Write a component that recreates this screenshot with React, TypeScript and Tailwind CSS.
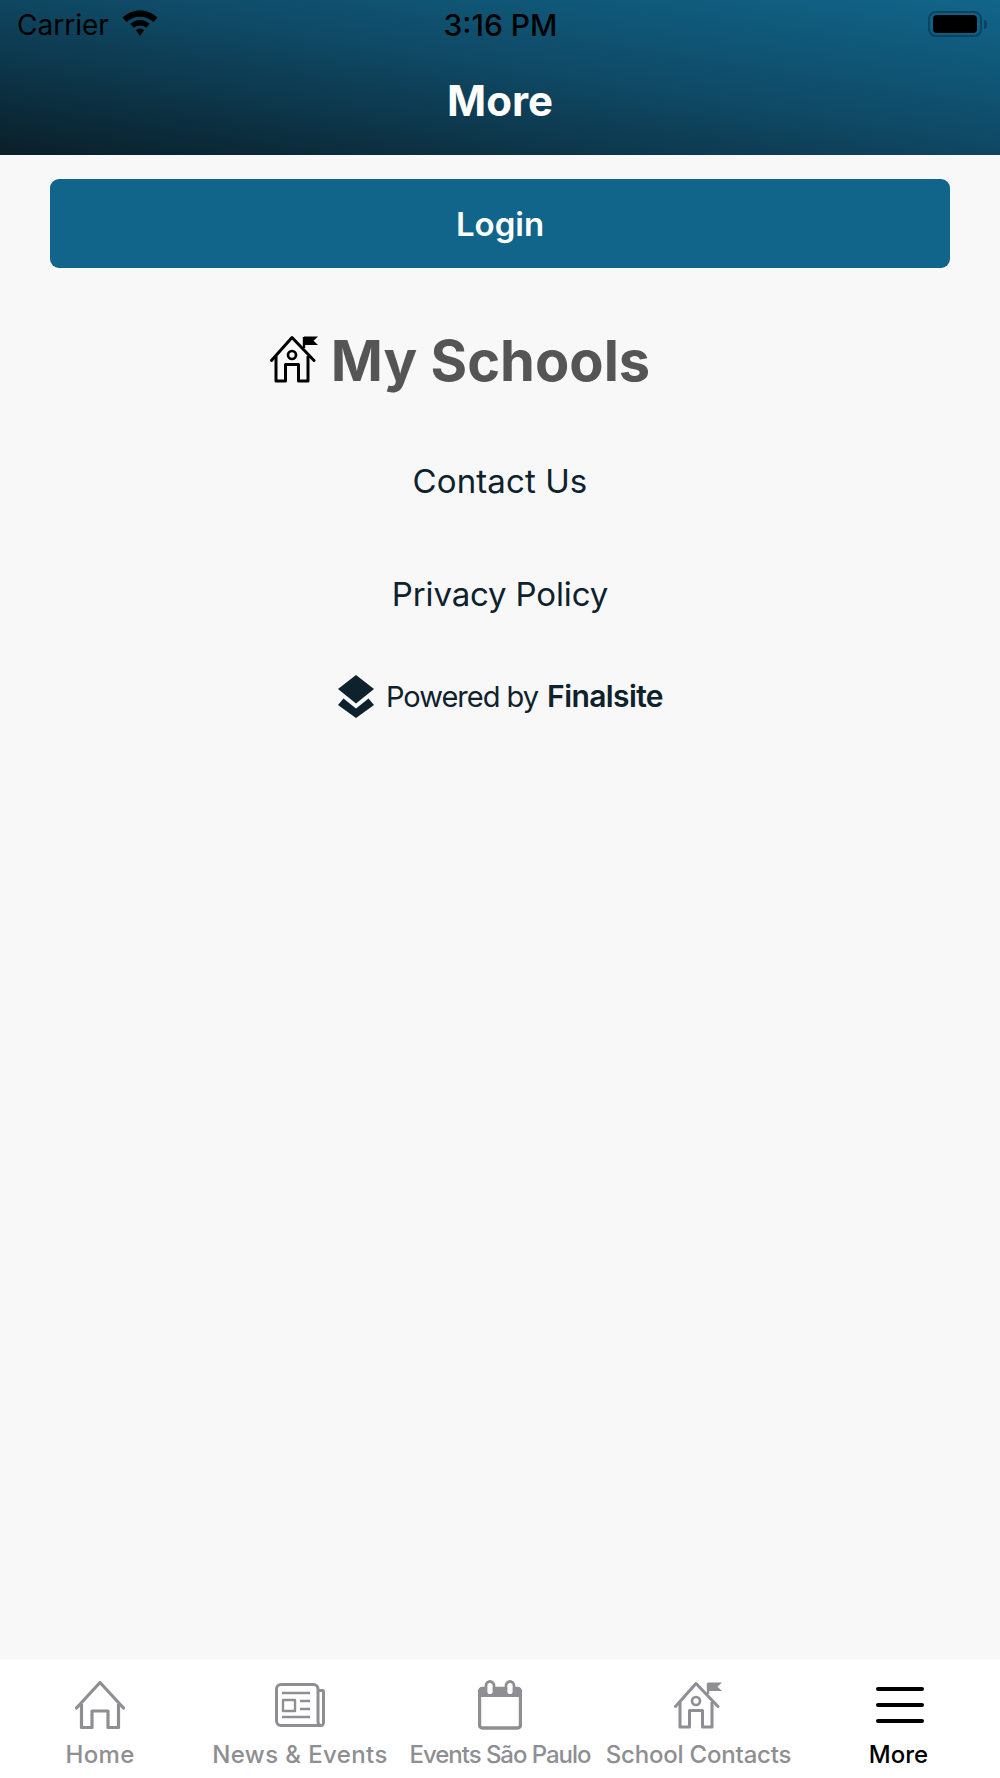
import React from "react";

const sans = "font-['Inter','Liberation_Sans',sans-serif]";

function Wifi() {
  return (
    <svg width="38" height="28" viewBox="0 0 36 28" className="ml-[12px] mt-[-4px]">
      <path d="M18 1.500C11.500 1.500 5.800 4 0.500 8.500L4.500 13C8.500 9.700 13 7.800 18 7.800C23 7.800 27.500 9.700 31.500 13L35.500 8.500C30.200 4 24.500 1.500 18 1.500Z" fill="#000" />
      <path d="M18 11C14.600 11 11.300 12.300 8.200 14.800L11.800 18.800C13.700 17.200 15.800 16.400 18 16.400C20.200 16.400 22.300 17.200 24.200 18.800L27.800 14.800C24.700 12.300 21.400 11 18 11Z" fill="#000" />
      <path d="M18 19.500C16.500 19.500 15.200 20 14 21.200L18 27L22 21.200C20.800 20 19.500 19.500 18 19.500Z" fill="#000" />
    </svg>
  );
}

function Battery() {
  return (
    <div className="mt-[-2px] flex items-center">
      <div className="flex h-[26px] w-[54px] items-center justify-center rounded-[8px] border-[2px] border-[#0b4460]">
        <div className="h-[18px] w-[44px] rounded-[4px] bg-black" />
      </div>
      <div className="ml-[2px] h-[9px] w-[3px] rounded-r-[3px] bg-[#0b4460]" />
    </div>
  );
}

function SchoolIcon({ color, strokeWidth }: { color: string; strokeWidth: number }) {
  return (
    <svg width="48" height="48" viewBox="0 0 48 48" fill="none">
      <path d="M1.500 25.500L22 2.500L44 25.500" stroke={color} strokeWidth={strokeWidth} strokeLinejoin="round" strokeLinecap="round" />
      <path d="M6 21V46H15.500V29.500H28.500V46H38V21" stroke={color} strokeWidth={strokeWidth} strokeLinejoin="round" />
      <circle cx="22" cy="20" r="4" stroke={color} strokeWidth={strokeWidth * 0.9} />
      <path d="M34 13V2" stroke={color} strokeWidth={strokeWidth * 0.8} />
      <path d="M34 1.500H48L43.500 5.800L48 10H34Z" fill={color} />
    </svg>
  );
}

function HomeIcon() {
  return (
    <svg width="50" height="50" viewBox="0 0 50 50" fill="none" stroke="#8e8e93" strokeWidth="3.200" strokeLinejoin="round">
      <path d="M1.500 28L25 2.500L48.500 28" strokeLinecap="round" />
      <path d="M6.500 24V47.500H17V31H33V47.500H43.500V24" />
    </svg>
  );
}

function NewsIcon() {
  return (
    <svg width="50" height="44" viewBox="0 0 50 44" fill="none" stroke="#8e8e93" strokeWidth="3" strokeLinejoin="round">
      <path d="M43 7.500V38.500C43 41 44.500 42.500 46 42.500H6C3.500 42.500 1.500 40.500 1.500 38V6C1.500 3.500 3.500 1.500 6 1.500H38.500C41 1.500 43 3.500 43 6V7.500H47.500C48 7.500 48.500 8 48.500 9V39.500C48.500 41 47.500 42.500 46 42.500" />
      <path d="M7 10H35M7 34H35M25 18H35M25 26H35" strokeWidth="2.400" />
      <rect x="8" y="17" width="12" height="11" strokeWidth="2.400" />
    </svg>
  );
}

function CalendarIcon() {
  return (
    <svg width="44" height="50" viewBox="0 0 44 50" fill="none">
      <rect x="1.500" y="8.500" width="41" height="39.500" rx="3" stroke="#8e8e93" strokeWidth="3.400" />
      <path d="M1 17V10C1 8 2.500 7 4 7H40C41.500 7 43 8 43 10V17Z" fill="#8e8e93" />
      <rect x="8" y="1.500" width="8" height="14" rx="4" fill="#fff" stroke="#8e8e93" strokeWidth="2.800" />
      <rect x="28" y="1.500" width="8" height="14" rx="4" fill="#fff" stroke="#8e8e93" strokeWidth="2.800" />
    </svg>
  );
}

function MenuIcon() {
  return (
    <div className="flex h-[50px] w-[48px] flex-col justify-center gap-[12px]">
      <div className="h-[4px] rounded-full bg-black" />
      <div className="h-[4px] rounded-full bg-black" />
      <div className="h-[4px] rounded-full bg-black" />
    </div>
  );
}

function Layers() {
  return (
    <svg width="38" height="43" viewBox="0 0 38 43" fill="#0d222d">
      <path d="M19 0L37 14L19 28.500L1 14Z" />
      <path d="M6.500 23.500L19 33.500L31.500 23.500L37 30L19 43L1 30Z" />
    </svg>
  );
}

function Tab({ icon, label, labelClass }: { icon: React.ReactNode; label: string; labelClass: string }) {
  return (
    <div className="flex w-[200px] flex-col items-center">
      <div className="flex h-[50px] items-center justify-center">{icon}</div>
      <span className={`mt-[11px] whitespace-nowrap text-[24px] font-medium leading-[28px] ${labelClass}`}>{label}</span>
    </div>
  );
}

export default function App() {
  return (
    <div className={`flex h-[1778px] w-[1000px] flex-col overflow-hidden bg-[#f8f8f9] ${sans}`}>
      <header className="flex h-[155px] shrink-0 flex-col bg-[linear-gradient(to_top_right,#0a1f29_0%,#0f4a66_55%,#11658a_100%)]">
        <div className="flex h-[50px] items-center justify-between pl-[17px] pr-[13px]">
          <div className="flex w-[300px] items-center text-[28px] leading-[32px] text-black">
            Carrier
            <Wifi />
          </div>
          <div className="mr-[3px] text-[30px] font-medium leading-[32px] text-black">3:16 PM</div>
          <div className="flex w-[300px] justify-end">
            <Battery />
          </div>
        </div>
        <div className="mt-[26px] text-center text-[42px] font-bold leading-[50px] text-white">More</div>
      </header>

      <main className="flex flex-1 flex-col items-center">
        <button className="mt-[24px] h-[89px] w-[900px] rounded-[9px] bg-[#11658a] pt-[2px] text-[33px] font-semibold text-white">
          Login
        </button>
        <div className="mt-[60px] flex items-center gap-[13px] pr-[80px]">
          <div className="mt-[-4px]">
            <SchoolIcon color="#000" strokeWidth={3} />
          </div>
          <span className="text-[56px] font-bold leading-[66px] text-[#555555]">My Schools</span>
        </div>
        <div className="mt-[67px] text-[33px] leading-[40px] tracking-[0.1px] text-[#0d222d]">Contact Us</div>
        <div className="mt-[73px] text-[33px] leading-[40px] tracking-[-0.15px] text-[#0d222d]">Privacy Policy</div>
        <div className="mt-[61px] flex items-center leading-[43px] text-[#0d222d]">
          <Layers />
          <span className="ml-[11px] text-[29px] tracking-[-1px]">Powered by</span>
          <span className="ml-[9px] text-[30px] font-semibold tracking-[-0.6px]">Finalsite</span>
        </div>
      </main>

      <nav className="flex h-[119px] shrink-0 items-start bg-white pt-[21px]">
        <Tab icon={<HomeIcon />} label="Home" labelClass="text-[#8e8e93] tracking-[0.35px]" />
        <Tab icon={<NewsIcon />} label="News & Events" labelClass="text-[#8e8e93] tracking-[0.4px]" />
        <Tab icon={<CalendarIcon />} label="Events São Paulo" labelClass="text-[#8e8e93] tracking-[-1.05px]" />
        <Tab
          icon={
            <div className="mr-[4px]">
              <SchoolIcon color="#8e8e93" strokeWidth={3} />
            </div>
          }
          label="School Contacts"
          labelClass="mr-[3px] text-[#8e8e93] tracking-[-0.2px]"
        />
        <Tab icon={<MenuIcon />} label="More" labelClass="mr-[3px] text-black" />
      </nav>
    </div>
  );
}
